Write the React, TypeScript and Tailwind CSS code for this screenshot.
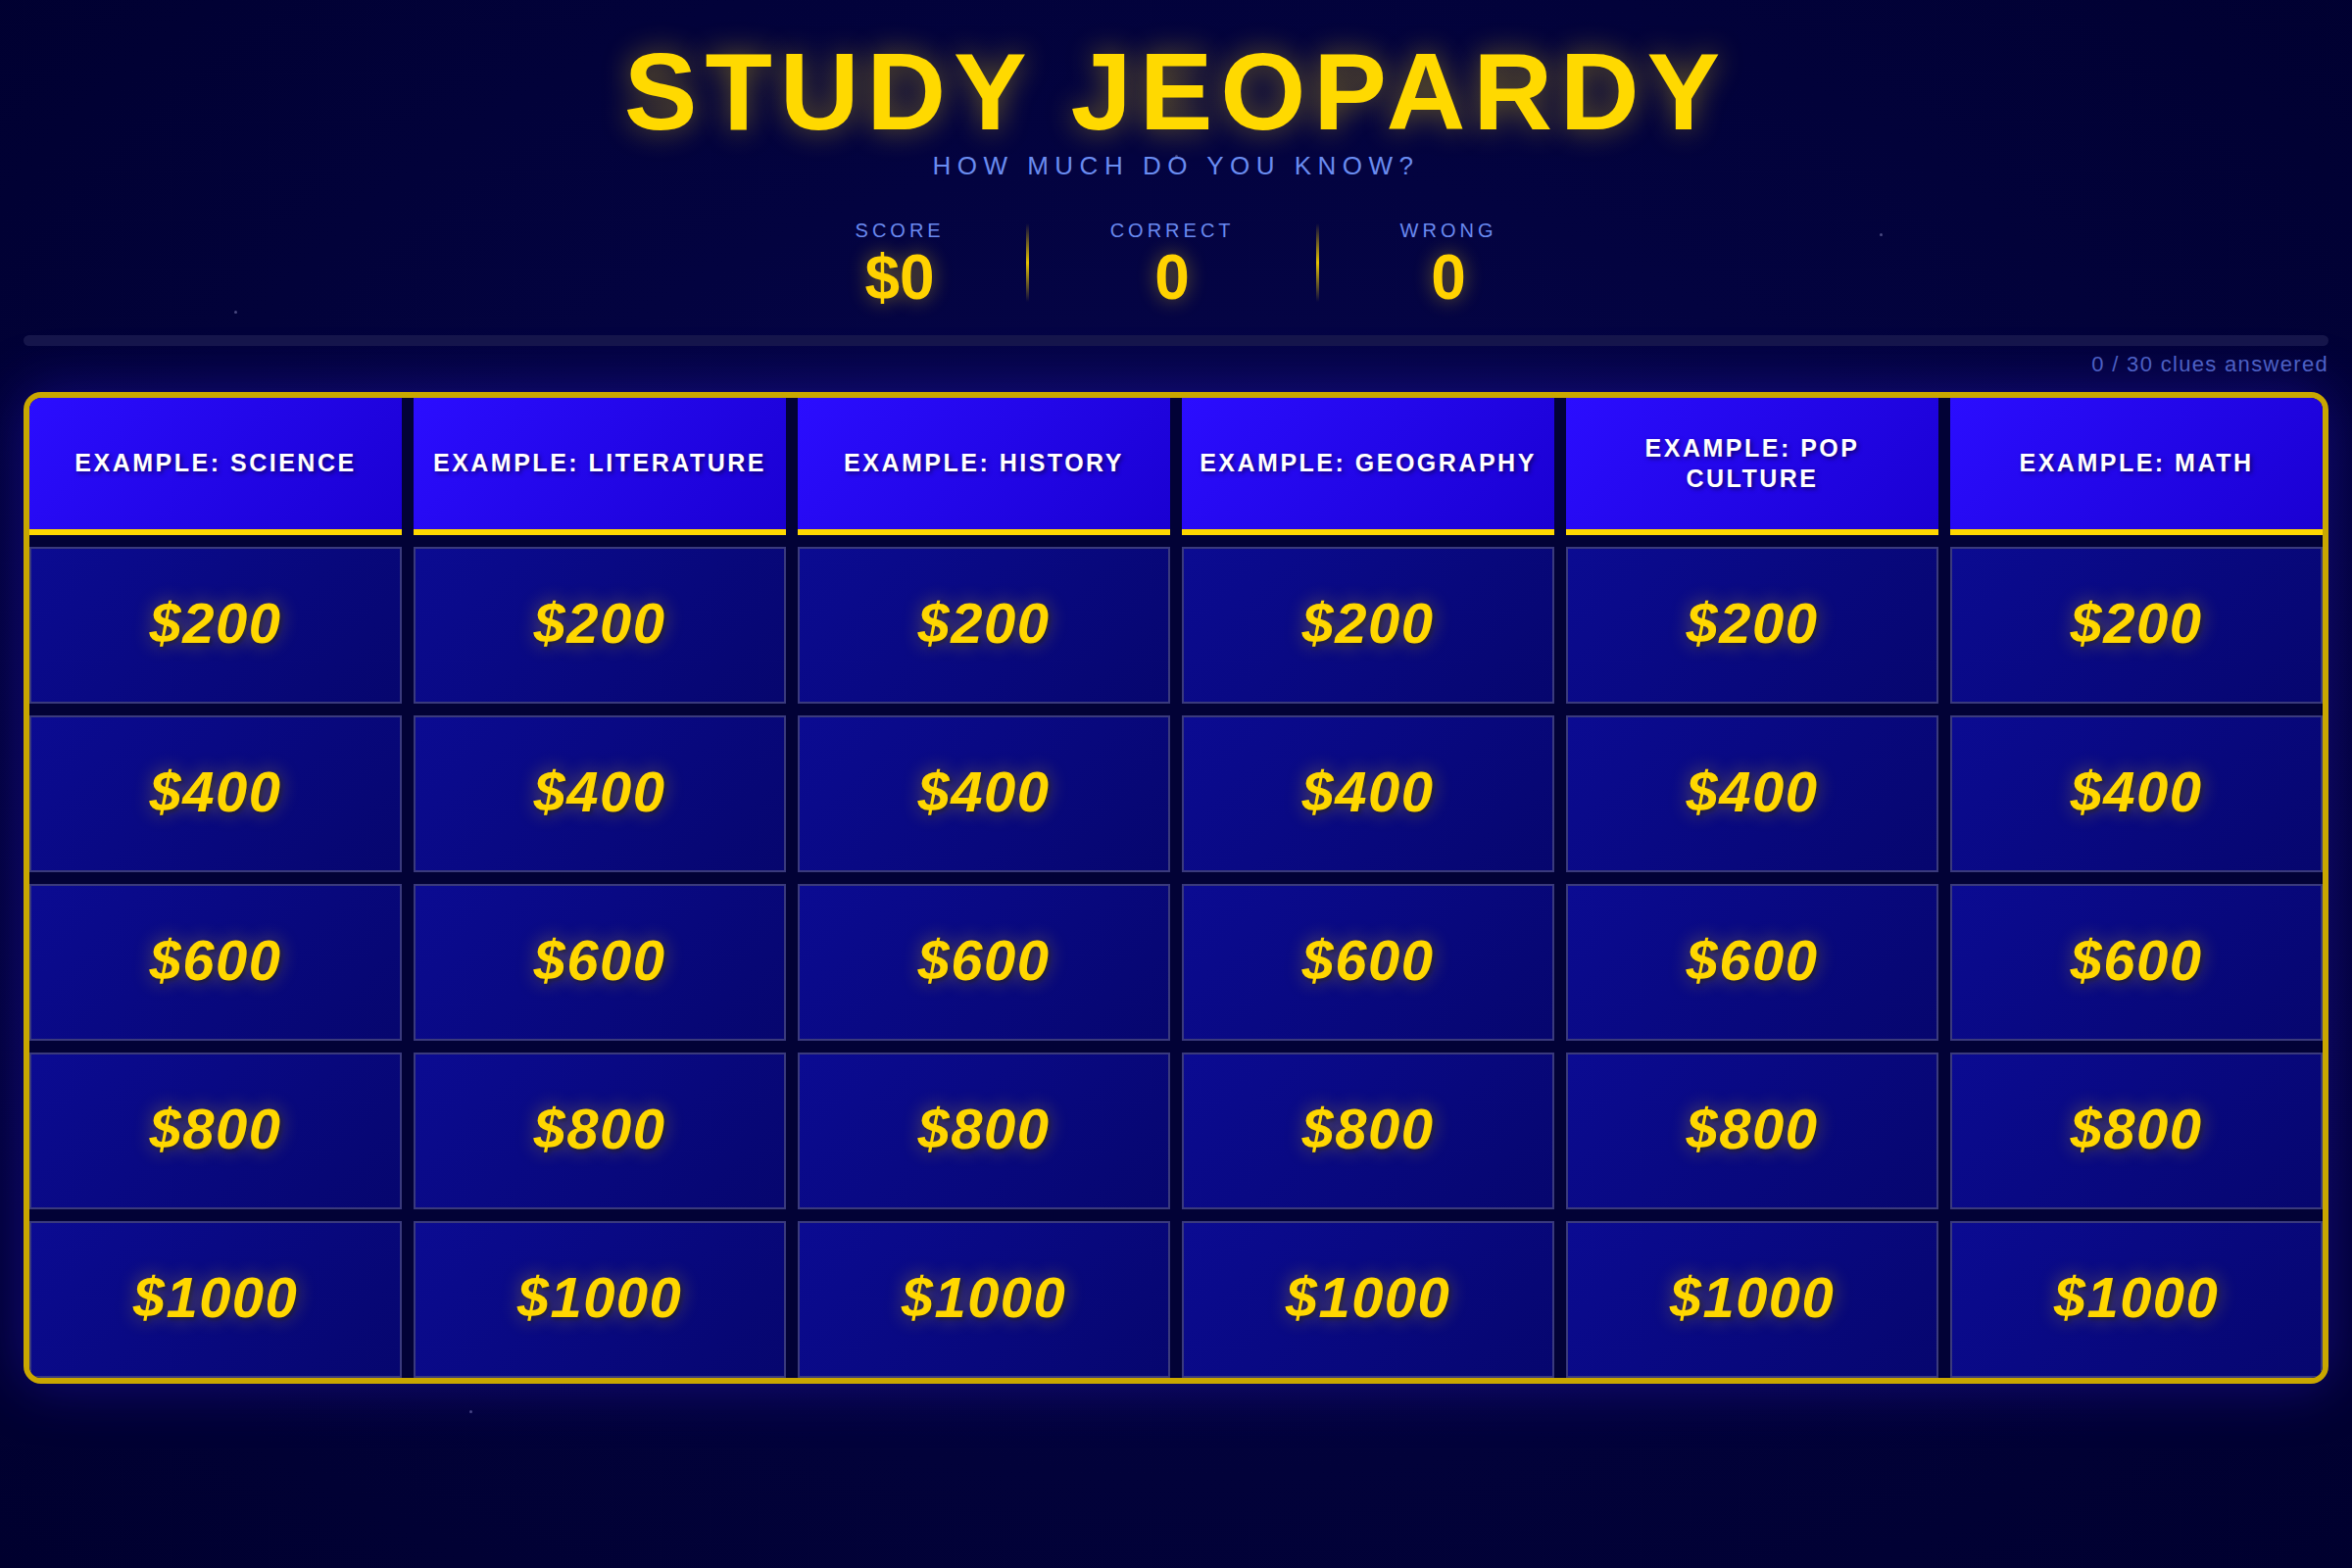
// App.tsx
import React from "react";

const categories = [
  "Example: Science",
  "Example: Literature",
  "Example: History",
  "Example: Geography",
  "Example: Pop Culture",
  "Example: Math",
];

const values = [200, 400, 600, 800, 1000];

// little background specks, placed on the canvas like stars
const stars = [
  { left: 239, top: 317 },
  { left: 1918, top: 238 },
  { left: 479, top: 1439 },
  { left: 1199, top: 158 },
];

function Stat({ label, value }: { label: string; value: string }) {
  return (
    <div className="flex flex-col items-center">
      <p className="text-[20px] leading-normal tracking-[0.2em] text-[#6a8af0]">
        {label}
      </p>
      <p className="mt-[1px] text-[64px] font-bold leading-none text-[#ffd200] [text-shadow:0_0_20px_rgba(255,215,0,0.45)]">
        {value}
      </p>
    </div>
  );
}

function Divider() {
  return (
    <div className="h-20 w-[3px] self-center bg-linear-to-b from-transparent via-[#e6c200] to-transparent" />
  );
}

export default function App() {
  return (
    <div className="relative min-h-screen overflow-hidden bg-[#00002f] bg-[radial-gradient(ellipse_at_50%_45%,#07064e_0%,#030340_45%,#00002e_100%)] font-['Liberation_Sans',Arial,sans-serif]">
      {stars.map((s, i) => (
        <span
          key={i}
          className="absolute h-[3px] w-[3px] rounded-full bg-[#6a6aa0] opacity-70"
          style={{ left: s.left, top: s.top }}
        />
      ))}

      <div className="relative px-6 pt-[38px]">
        <header className="flex flex-col items-center">
          <h1 className="text-[112px] font-bold leading-none tracking-[0.07em] text-[#ffd900] [text-shadow:0_0_30px_rgba(255,215,0,0.45)]">
            STUDY JEOPARDY
          </h1>
          <p className="text-[26px] leading-normal tracking-[0.25em] text-[#6a8cf0]">
            HOW MUCH DO YOU KNOW?
          </p>

          <div className="mt-[31px] flex items-stretch gap-[83px]">
            <Stat label="SCORE" value="$0" />
            <Divider />
            <Stat label="CORRECT" value="0" />
            <Divider />
            <Stat label="WRONG" value="0" />
          </div>
        </header>

        {/* progress */}
        <div className="mt-[27px] h-[11px] w-full rounded-full bg-[#16164a]" />
        <p className="mt-[2px] text-right text-[22px] leading-normal tracking-[0.06em] text-[#4d60c4]">
          0 / 30 clues answered
        </p>

        {/* board */}
        <div className="mt-3 grid grid-cols-6 gap-3 overflow-hidden rounded-[18px] border-[6px] border-[#c9a700] bg-[#020236] shadow-[0_0_60px_rgba(45,25,210,0.45)]">
          {categories.map((c) => (
            <div
              key={c}
              className="flex h-[140px] items-center justify-center border-b-[6px] border-[#ffd700] bg-[linear-gradient(135deg,#2b0dff,#1a00d2)] px-4 text-center"
            >
              <span className="text-[25px] font-bold uppercase leading-tight tracking-[0.1em] text-white [text-shadow:2px_2px_4px_rgba(0,0,0,0.5)]">
                {c}
              </span>
            </div>
          ))}

          {values.map((v) =>
            categories.map((c) => (
              <button
                key={`${c}-${v}`}
                type="button"
                className="flex h-[160px] items-center justify-center border-2 border-[#3a3a7c] bg-[linear-gradient(135deg,#0b0b92,#06066e)] pb-[6px]"
              >
                <span className="text-[58px] font-bold italic tracking-[0.025em] text-[#ffd700] [text-shadow:0_0_20px_rgba(255,215,0,0.4),2px_2px_4px_rgba(0,0,0,0.5)]">
                  ${v}
                </span>
              </button>
            ))
          )}
        </div>
      </div>
    </div>
  );
}
